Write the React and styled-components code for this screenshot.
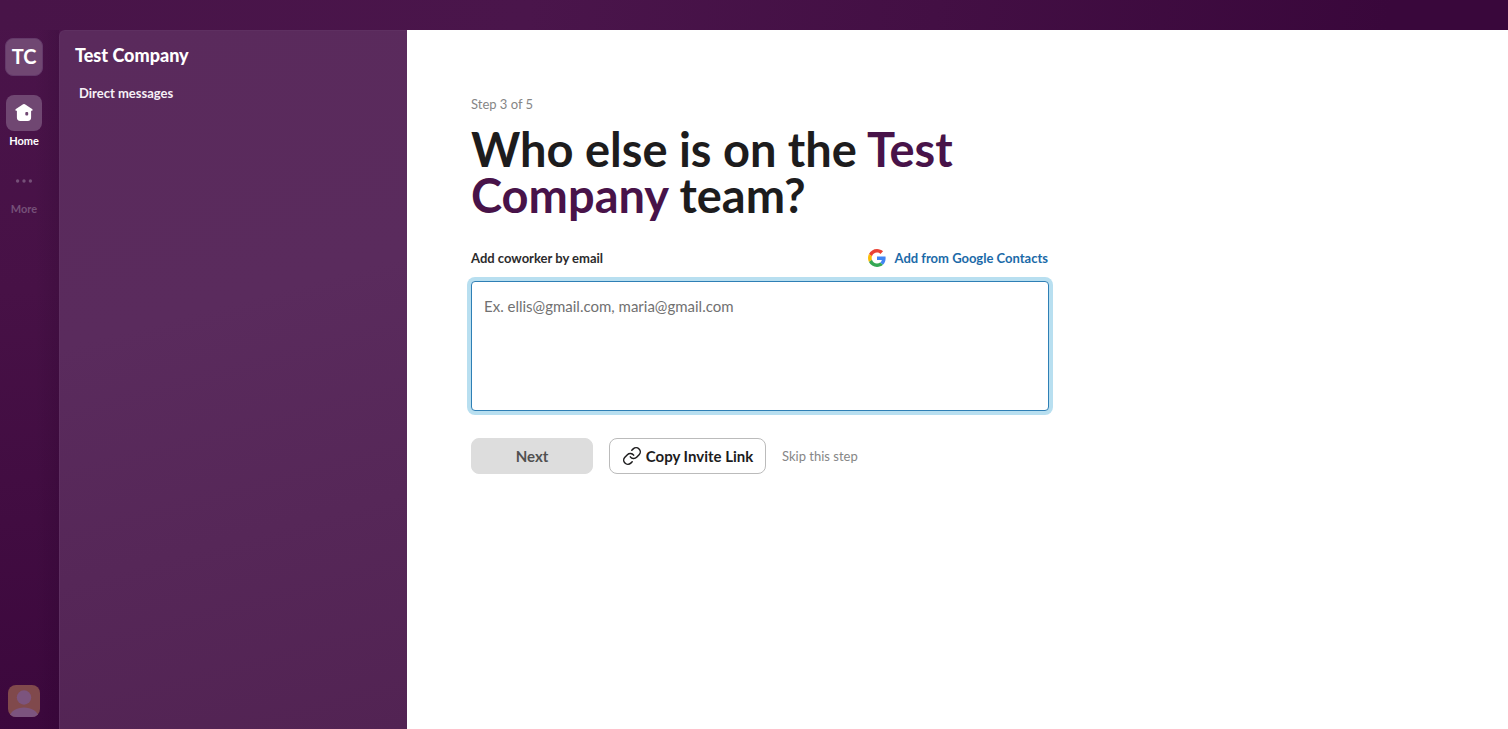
import React from 'react';
import styled, { createGlobalStyle } from 'styled-components';
import { Link } from 'lucide-react';

const GlobalStyle = createGlobalStyle`
  *, *::before, *::after { box-sizing: border-box; }
  body {
    margin: 0;
    font-family: Lato, "Liberation Sans", sans-serif;
    color: #1d1c1d;
  }
  h1, h2, p { margin: 0; }
  button, textarea { font-family: inherit; }
  svg { display: block; flex: none; }
`;

const Shell = styled.div`
  display: flex;
  flex-direction: column;
  min-height: 100vh;
  background: linear-gradient(176deg, #4a144a 0%, #471146 35%, #3c083d 85%, #3a073b 100%);
`;

const TopBar = styled.header`
  height: 30px;
  background: linear-gradient(100deg, #481448 0%, #4a154b 35%, #430f44 62%, #39073b 92%, #39073b 100%);
`;

const Body = styled.div`
  display: flex;
  flex: 1;
`;

const Rail = styled.nav`
  display: flex;
  flex-direction: column;
  align-items: center;
  width: 59px;
  padding: 8px 11px 12px 0;
  background: linear-gradient(90deg, transparent 60%, rgba(30, 0, 35, 0.15));
`;

const WorkspaceBadge = styled.button`
  width: 38px;
  height: 38px;
  padding: 0 0 2px;
  border: 1px solid #64396a;
  border-radius: 8px;
  background: #704772;
  color: #fff;
  font-size: 20px;
  font-weight: 700;
  line-height: 24px;
`;

const RailItem = styled.a`
  display: flex;
  flex-direction: column;
  align-items: center;
  margin-top: ${(p) => (p.$active ? 19 : 12)}px;
  color: ${(p) => (p.$active ? '#fff' : '#755078')};
  font-size: 11px;
  font-weight: 700;
  line-height: 20px;
  text-decoration: none;
`;

const RailIcon = styled.span`
  display: flex;
  align-items: center;
  justify-content: center;
  width: 36px;
  height: 36px;
  border-radius: 8px;
  background: ${(p) => (p.$active ? '#704772' : 'transparent')};
`;

const Avatar = styled.button`
  width: 32px;
  height: 32px;
  margin-top: auto;
  padding: 0;
  overflow: hidden;
  border: 0;
  border-radius: 8px;
  background: #80494c;
`;

const Sidebar = styled.aside`
  width: 348px;
  padding: 13px 15px;
  border-top-left-radius: 6px;
  border-left: 1px solid #5e3061;
  border-top: 1px solid #5e3061;
  background: linear-gradient(165deg, #5a2a5c 0%, #5a2b5d 40%, #522353 100%);
  color: #fff;
`;

const WorkspaceName = styled.h2`
  font-size: 18px;
  font-weight: 900;
  line-height: 22px;
`;

const SectionLink = styled.a`
  display: block;
  margin-top: 16px;
  padding-left: 4px;
  color: #f6f0f6;
  font-size: 13px;
  font-weight: 700;
  line-height: 22px;
  text-decoration: none;
`;

const Main = styled.main`
  flex: 1;
  min-width: 0;
  padding: 64px;
  background: #fff;
`;

const Content = styled.form`
  max-width: 578px;
`;

const Step = styled.p`
  color: #868686;
  font-size: 13px;
  line-height: 20px;
`;

const Title = styled.h1`
  margin-top: 12px;
  font-size: 47px;
  font-weight: 700;
  line-height: 46px;

  span { color: #481349; }
`;

const FieldHeader = styled.div`
  display: flex;
  align-items: center;
  justify-content: space-between;
  margin-top: 30px;
  padding-right: 1px;
  color: #2c2b2c;
  font-size: 13px;
  font-weight: 700;
  line-height: 20px;
`;

const GoogleLink = styled.a`
  display: flex;
  align-items: center;
  gap: 8px;
  color: #1b6aa8;
  text-decoration: none;
`;

const Emails = styled.textarea`
  display: block;
  width: 100%;
  height: 130px;
  margin-top: 13px;
  padding: 12px;
  resize: none;
  border: 1px solid #2f7fb5;
  border-radius: 4px;
  outline: 0;
  box-shadow: 0 0 0 4px #b8dff0;
  color: #1d1c1d;
  font-size: 15px;
  line-height: 24px;

  &::placeholder { color: #717171; opacity: 1; }
`;

const Actions = styled.div`
  display: flex;
  align-items: center;
  gap: 16px;
  margin-top: 27px;
`;

const Button = styled.button`
  display: flex;
  align-items: center;
  justify-content: center;
  gap: 4px;
  height: 36px;
  min-width: ${(p) => (p.$outline ? 157 : 122)}px;
  padding: 0 11px;
  border: 1px solid ${(p) => (p.$outline ? '#bbb' : '#ddd')};
  border-radius: 8px;
  background: ${(p) => (p.$outline ? '#fff' : '#ddd')};
  color: ${(p) => (p.$outline ? '#1d1c1d' : '#505050')};
  font-size: 15px;
  font-weight: 700;
  white-space: nowrap;
`;

const SkipButton = styled.button`
  padding: 0;
  border: 0;
  background: none;
  color: #868686;
  font-size: 13px;
  line-height: 20px;
`;

const HomeIcon = () => (
  <svg width="20" height="20" viewBox="0 0 20 20" fill="currentColor" aria-hidden="true">
    <path
      fillRule="evenodd"
      d="M9.100 1.300a1.600 1.600 0 0 1 1.800 0l7.200 4.600c.9.600.5 1.900-.6 1.900h-.4v6.700a3.400 3.400 0 0 1-3.400 3.400H6.300a3.400 3.400 0 0 1-3.400-3.400V7.800h-.4c-1.100 0-1.500-1.300-.6-1.900zM12.300 9a1 1 0 0 0-1 1v1.500a1 1 0 0 0 1 1h.9a1 1 0 0 0 1-1V10a1 1 0 0 0-1-1z"
    />
  </svg>
);

const MoreIcon = () => (
  <svg width="20" height="20" viewBox="0 0 20 20" fill="currentColor" aria-hidden="true">
    <circle cx="3.600" cy="10" r="1.700" />
    <circle cx="10" cy="10" r="1.700" />
    <circle cx="16.400" cy="10" r="1.700" />
  </svg>
);

const PersonIcon = () => (
  <svg width="32" height="32" viewBox="0 0 32 32" fill="#7c547e" aria-hidden="true">
    <circle cx="16" cy="12.500" r="7.200" />
    <path d="M1 32c2-6 7.500-9.500 15-9.500S29 26 31 32z" />
  </svg>
);

const GoogleIcon = () => (
  <svg width="18" height="18" viewBox="0 0 48 48" aria-hidden="true">
    <path fill="#EA4335" d="M24 9.500c3.540 0 6.710 1.220 9.210 3.600l6.850-6.850C35.900 2.380 30.470 0 24 0 14.620 0 6.510 5.380 2.560 13.220l7.980 6.190C12.430 13.720 17.740 9.500 24 9.500z" />
    <path fill="#4285F4" d="M46.980 24.550c0-1.570-.15-3.090-.38-4.550H24v9.020h12.940c-.58 2.960-2.260 5.480-4.780 7.180l7.730 6c4.510-4.180 7.090-10.360 7.090-17.650z" />
    <path fill="#FBBC05" d="M10.530 28.590c-.48-1.450-.76-2.990-.76-4.590s.27-3.140.76-4.590l-7.980-6.190C.92 16.460 0 20.120 0 24c0 3.880.92 7.540 2.560 10.780l7.970-6.190z" />
    <path fill="#34A853" d="M24 48c6.480 0 11.930-2.130 15.890-5.810l-7.730-6c-2.150 1.450-4.920 2.300-8.160 2.300-6.260 0-11.570-4.220-13.470-9.910l-7.980 6.190C6.510 42.620 14.620 48 24 48z" />
  </svg>
);

export default function App() {
  return (
    <>
      <GlobalStyle />
      <Shell>
        <TopBar />
        <Body>
          <Rail aria-label="Workspace">
            <WorkspaceBadge type="button">TC</WorkspaceBadge>
            <RailItem href="#home" $active>
              <RailIcon $active><HomeIcon /></RailIcon>
              Home
            </RailItem>
            <RailItem href="#more">
              <RailIcon><MoreIcon /></RailIcon>
              More
            </RailItem>
            <Avatar type="button" aria-label="Profile"><PersonIcon /></Avatar>
          </Rail>
          <Sidebar>
            <WorkspaceName>Test Company</WorkspaceName>
            <SectionLink href="#messages">Direct messages</SectionLink>
          </Sidebar>
          <Main>
            <Content onSubmit={(e) => e.preventDefault()}>
              <Step>Step 3 of 5</Step>
              <Title>
                Who else is on the <span>Test Company</span> team?
              </Title>
              <FieldHeader>
                <label htmlFor="emails">Add coworker by email</label>
                <GoogleLink href="#google-contacts">
                  <GoogleIcon />
                  Add from Google Contacts
                </GoogleLink>
              </FieldHeader>
              <Emails id="emails" placeholder="Ex. ellis@gmail.com, maria@gmail.com" />
              <Actions>
                <Button type="submit" disabled>Next</Button>
                <Button type="button" $outline>
                  <Link size={20} strokeWidth={1.8} aria-hidden="true" />
                  Copy Invite Link
                </Button>
                <SkipButton type="button">Skip this step</SkipButton>
              </Actions>
            </Content>
          </Main>
        </Body>
      </Shell>
    </>
  );
}
